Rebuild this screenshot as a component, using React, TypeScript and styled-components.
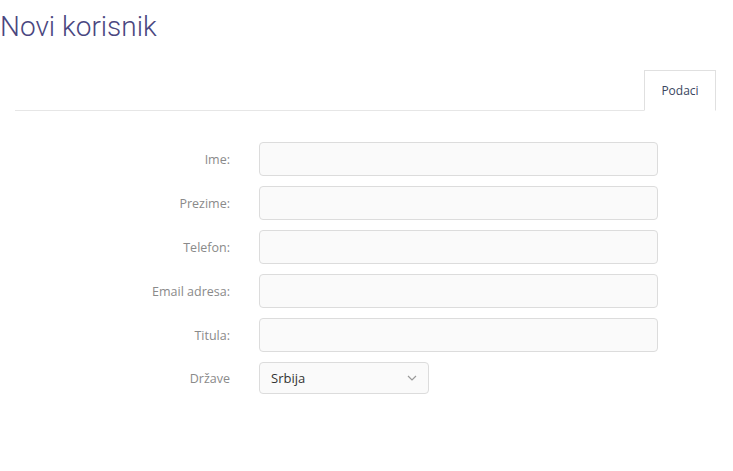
import React from "react";
import styled, { createGlobalStyle } from "styled-components";

const Global = createGlobalStyle`
  html, body { margin: 0; padding: 0; background: #fff; }
  body { font-family: "Open Sans", "Liberation Sans", sans-serif; }
  * { box-sizing: border-box; }
`;

const Page = styled.div`
  width: 733px;
  height: 471px;
  display: flex;
  flex-direction: column;
`;

const Title = styled.h1`
  margin: 0;
  padding: 7px 0 0 0;
  height: 70px;
  font-family: "Roboto", "Open Sans", sans-serif;
  font-weight: 300;
  font-size: 28px;
  line-height: 40px;
  color: #4a4680;
`;

const TabBar = styled.div`
  margin-left: 15px;
  width: 701px;
  height: 41px;
  display: flex;
  justify-content: flex-end;
  align-items: flex-end;
  border-bottom: 1px solid #e6e6e6;
`;

const Tab = styled.div<{ $active?: boolean }>`
  width: 72px;
  height: 41px;
  margin-bottom: -1px;
  display: flex;
  align-items: center;
  justify-content: center;
  font-size: 12px;
  color: #3a4660;
  background: #fff;
  border: 1px solid #e0e0e0;
  border-bottom-color: ${(p) => (p.$active ? "#fff" : "#e0e0e0")};
`;

const Form = styled.div`
  margin-top: 31px;
  display: grid;
  grid-template-columns: 230px 399px;
  column-gap: 29px;
  row-gap: 10px;
  align-items: center;
`;

const Label = styled.label`
  text-align: right;
  font-size: 12.5px;
  color: #8a8a8a;
`;

const Input = styled.input`
  height: 34px;
  width: 100%;
  border: 1px solid #dcdcdc;
  border-radius: 4px;
  background: #fafafa;
  outline: none;
  font-family: inherit;
  font-size: 12px;
`;

const SelectBox = styled.div`
  width: 170px;
  height: 32px;
  border: 1px solid #dcdcdc;
  border-radius: 4px;
  background: #fafafa;
  display: flex;
  align-items: center;
  justify-content: space-between;
  padding: 0 11px 0 11px;
  font-size: 13px;
  color: #333;
`;

const fields = ["Ime:", "Prezime:", "Telefon:", "Email adresa:", "Titula:"];

export default function App() {
  return (
    <Page>
      <Global />
      <Title>Novi korisnik</Title>
      <TabBar>
        <Tab $active>Podaci</Tab>
      </TabBar>
      <Form>
        {fields.map((f) => (
          <React.Fragment key={f}>
            <Label>{f}</Label>
            <Input />
          </React.Fragment>
        ))}
        <Label>Države</Label>
        <SelectBox>
          <span>Srbija</span>
          <svg width="10" height="6" viewBox="0 0 10 6">
            <path d="M1 1 L5 5 L9 1" fill="none" stroke="#9a9a9a" strokeWidth="1.2" />
          </svg>
        </SelectBox>
      </Form>
    </Page>
  );
}
